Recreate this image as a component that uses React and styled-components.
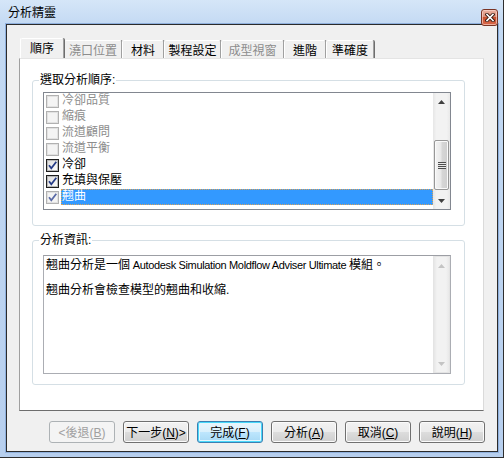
import React from 'react'
import styled, { createGlobalStyle, css } from 'styled-components'

const GlobalStyle = createGlobalStyle`
  html, body {
    margin: 0;
    padding: 0;
  }
  body {
    font-family: "Liberation Sans", "Noto Sans CJK TC", sans-serif;
    font-size: 12px;
    color: #000;
  }
  * {
    box-sizing: border-box;
  }
`

const tabs = [
  { label: '順序', w: 44, active: true },
  { label: '澆口位置', w: 58, disabled: true },
  { label: '材料', w: 42 },
  { label: '製程設定', w: 57 },
  { label: '成型視窗', w: 63, disabled: true },
  { label: '進階', w: 42 },
  { label: '準確度', w: 48 },
]

const analyses = [
  { label: '冷卻品質', disabled: true },
  { label: '縮痕', disabled: true },
  { label: '流道顧問', disabled: true },
  { label: '流道平衡', disabled: true },
  { label: '冷卻', checked: true },
  { label: '充填與保壓', checked: true },
  { label: '翹曲', checked: true, disabled: true, selected: true },
]

const CheckMark = ({ color }) => (
  <svg width="11" height="11" viewBox="0 0 11 11">
    <path d="M2 5.2 L4.3 8.2 L9.3 1.8" fill="none" stroke={color} strokeWidth="1.8" />
  </svg>
)

const Arrow = ({ up, color }) => (
  <svg width="7" height="4" viewBox="0 0 7 4">
    <path d={up ? 'M0 4 L3.5 0 L7 4 Z' : 'M0 0 L3.5 4 L7 0 Z'} fill={color} />
  </svg>
)

const CheckBox = ({ checked, disabled }) => (
  <Box $disabled={disabled}>
    {checked && <CheckMark color={disabled ? '#5a6aa6' : '#263c87'} />}
  </Box>
)

const ScrollBar = ({ disabled, thumb }) => {
  const color = disabled ? '#c4c4c4' : '#404040'
  return (
    <Track $disabled={disabled}>
      <ArrowButton>
        <Arrow up color={color} />
      </ArrowButton>
      <TrackBody>
        {thumb && (
          <Thumb>
            <Grip />
          </Thumb>
        )}
      </TrackBody>
      <ArrowButton>
        <Arrow color={color} />
      </ArrowButton>
    </Track>
  )
}

const Key = ({ children }) => <u>{children}</u>

export default function App() {
  return (
    <>
      <GlobalStyle />
      <Window>
        <TitleBar>分析精靈</TitleBar>
        <CloseButton>
          <svg width="10" height="9" viewBox="0 0 10 9">
            <path d="M2 1.5 L8 7.5 M8 1.5 L2 7.5" stroke="#3a1b12" strokeWidth="3.4" strokeLinecap="square" />
            <path d="M2 1.5 L8 7.5 M8 1.5 L2 7.5" stroke="#fff" strokeWidth="1.6" strokeLinecap="square" />
          </svg>
        </CloseButton>
        <Client>
          <TabRow>
            {tabs.map(t => (
              <Tab key={t.label} $w={t.w} $active={t.active} $disabled={t.disabled}>
                {t.label}
              </Tab>
            ))}
          </TabRow>
          <Panel>
            <Group $pad="5px 13px 15px 10px">
              <Legend>選取分析順序:</Legend>
              <ListBox>
                <List>
                  {analyses.map(a => (
                    <Row key={a.label}>
                      <CheckBox checked={a.checked} disabled={a.disabled} />
                      <RowLabel $disabled={a.disabled} $selected={a.selected}>
                        {a.label}
                      </RowLabel>
                    </Row>
                  ))}
                </List>
                <ScrollBar thumb />
              </ListBox>
            </Group>
            <Group $pad="8px 13px 10px 10px" $gap>
              <Legend>分析資訊:</Legend>
              <InfoBox>
                <InfoText>
                  <Para>
                    翹曲分析是一個<Latin> Autodesk Simulation Moldflow Adviser Ultimate </Latin>模組。
                  </Para>
                  <Para>翹曲分析會檢查模型的翹曲和收縮.</Para>
                </InfoText>
                <ScrollBar disabled />
              </InfoBox>
            </Group>
          </Panel>
          <ButtonRow>
            <Button disabled>&lt;後退(<Key>B</Key>)</Button>
            <Button>下一步(<Key>N</Key>)&gt;</Button>
            <Button $default>完成(<Key>F</Key>)</Button>
            <Button>分析(<Key>A</Key>)</Button>
            <Button>取消(<Key>C</Key>)</Button>
            <Button>說明(<Key>H</Key>)</Button>
          </ButtonRow>
        </Client>
      </Window>
    </>
  )
}

const Window = styled.div`
  position: relative;
  width: 504px;
  height: 458px;
  display: flex;
  flex-direction: column;
  padding: 0 5px 5px 6px;
  background: linear-gradient(to bottom, #d5e6f8 0, #c4daf3 24px, #b7cfee 100%);
  border-right: 1px solid #2e2e2e;
  border-bottom: 1px solid #2e2e2e;
`

const TitleBar = styled.div`
  height: 24px;
  flex: none;
  display: flex;
  align-items: center;
  padding: 0 0 2px 2px;
  font-size: 12px;
  color: #000;
`

const CloseButton = styled.div`
  position: absolute;
  top: 9px;
  left: 481px;
  width: 17px;
  height: 17px;
  display: flex;
  align-items: center;
  justify-content: center;
  border: 1px solid #7a3424;
  border-radius: 3px;
  background: linear-gradient(to bottom, #eab2a3 0%, #dc8d77 45%, #c9502f 50%, #d8694b 100%);
  box-shadow: inset 0 0 0 1px rgba(255, 220, 210, 0.6);
  z-index: 2;
`

const Client = styled.div`
  flex: 1;
  display: flex;
  flex-direction: column;
  background: #f0f0f0;
  border: 1px solid #2b2b2b;
  box-shadow: 0 0 0 1px #8fb0dd;
  padding: 13px 13px 8px 12px;
`

const TabRow = styled.div`
  height: 20px;
  flex: none;
  display: flex;
  align-items: flex-end;
  padding-left: 1px;
`

const Tab = styled.div`
  width: ${p => p.$w}px;
  height: ${p => (p.$active ? 20 : 18)}px;
  display: flex;
  align-items: center;
  justify-content: center;
  padding-bottom: ${p => (p.$active ? 2 : 1)}px;
  background: #f0f0f0;
  border-top: 1px solid #fff;
  border-left: 1px solid #fff;
  border-right: 1px solid #a0a0a0;
  box-shadow: 1px 0 0 #6e6e6e;
  border-radius: 2px 2px 0 0;
  color: ${p => (p.$disabled ? '#8d8d8d' : '#000')};
  font-size: 12px;
  position: relative;
  z-index: ${p => (p.$active ? 1 : 0)};
`

const Panel = styled.div`
  flex: 1;
  display: flex;
  flex-direction: column;
  background: #fff;
  border: 1px solid #a0a0a0;
  border-top-color: #e4e4e4;
  border-right-color: #dadada;
  border-bottom-color: #6d6d6d;
  padding: 14px 18px 0 12px;
`

const Group = styled.fieldset`
  margin: ${p => (p.$gap ? '7px 0 0' : '0')};
  padding: ${p => p.$pad};
  border: 1px solid #d5dfe5;
  border-radius: 3px;
  min-width: 0;
`

const Legend = styled.legend`
  margin-left: -4px;
  padding: 0 1px;
  line-height: 14px;
  font-size: 12px;
  color: #000;
`

const ListBox = styled.div`
  height: 118px;
  display: flex;
  background: #fff;
  border: 1px solid #828790;
`

const List = styled.div`
  flex: 1;
  padding-left: 2px;
`

const Row = styled.div`
  height: 16px;
  display: flex;
  align-items: center;
`

const Box = styled.span`
  width: 13px;
  height: 13px;
  flex: none;
  display: flex;
  align-items: center;
  justify-content: center;
  border: 1px solid ${p => (p.$disabled ? '#b1b1b1' : '#1e1e1e')};
  background: ${p =>
    p.$disabled ? '#f4f4f4' : 'linear-gradient(135deg, #dcdcdc, #ffffff)'};
  box-shadow: inset 0 0 0 1px ${p => (p.$disabled ? '#e2e2e2' : '#b8b8b8')};
`

const RowLabel = styled.span`
  flex: 1;
  height: 16px;
  margin-left: 2px;
  padding: 0 1px;
  line-height: 15px;
  color: ${p => (p.$selected ? '#fff' : p.$disabled ? '#8d8d8d' : '#000')};
  ${p =>
    p.$selected &&
    css`
      background: #3399ff;
      outline: 1px dotted #d9a25a;
      outline-offset: -1px;
    `}
`

const Track = styled.div`
  width: 17px;
  flex: none;
  display: flex;
  flex-direction: column;
  background: linear-gradient(to right, #e6e6e6, #f2f2f2 20%, #f2f2f2 80%, #e9e9e9);
  border: ${p => (p.$disabled ? '1px solid #e4e4e4' : 'none')};
`

const ArrowButton = styled.div`
  height: 17px;
  flex: none;
  display: flex;
  align-items: center;
  justify-content: center;
`

const TrackBody = styled.div`
  flex: 1;
  display: flex;
  flex-direction: column;
  justify-content: flex-end;
  padding: 0 0 2px;
`

const Thumb = styled.div`
  height: 50px;
  margin: 0 1px;
  display: flex;
  align-items: center;
  justify-content: center;
  border: 1px solid #979797;
  border-radius: 2px;
  background: linear-gradient(to right, #f4f4f4, #e8e8e8 45%, #d6d6d6 55%, #cfcfcf);
  box-shadow: inset 0 0 0 1px #fafafa;
`

const Grip = styled.div`
  width: 8px;
  height: 7px;
  background: repeating-linear-gradient(
    to bottom,
    #4e4e4e 0,
    #4e4e4e 1px,
    #e8e8e8 1px,
    #e8e8e8 2px
  );
`

const InfoBox = styled.div`
  height: 119px;
  display: flex;
  background: #fff;
  border: 1px solid #abadb3;
  border-top-color: #9c9ea4;
`

const InfoText = styled.div`
  flex: 1;
  padding: 3px 2px;
  font-size: 12px;
`

const Para = styled.p`
  margin: 0 0 12px;
  line-height: 13px;
  white-space: nowrap;
`

const Latin = styled.span`
  font-size: 11px;
  letter-spacing: -0.35px;
`

const ButtonRow = styled.div`
  height: 22px;
  flex: none;
  margin: 10px -1px 0 0;
  display: flex;
  justify-content: flex-end;
  gap: 8px;
`

const Button = styled.button`
  width: 66px;
  height: 22px;
  padding: 0 0 1px;
  font-family: inherit;
  font-size: 12px;
  color: #000;
  border: 1px solid #707070;
  border-radius: 3px;
  background: linear-gradient(to bottom, #f2f2f2 0%, #ebebeb 50%, #dddddd 51%, #cfcfcf 100%);
  box-shadow: inset 0 0 0 1px #fbfbfb;
  ${p =>
    p.$default &&
    css`
      border-color: #3c7fb1;
      background: linear-gradient(to bottom, #eaf6fd 0%, #d9f0fc 50%, #bee6fd 51%, #a7d9f5 100%);
      box-shadow: inset 0 0 0 1px #48d8fb, inset 0 0 0 2px #e4f6fd;
    `}
  &:disabled {
    color: #a0a0a0;
    border-color: #adb2b5;
    background: #f4f4f4;
    box-shadow: none;
  }
  u {
    text-decoration-thickness: 1px;
  }
`
